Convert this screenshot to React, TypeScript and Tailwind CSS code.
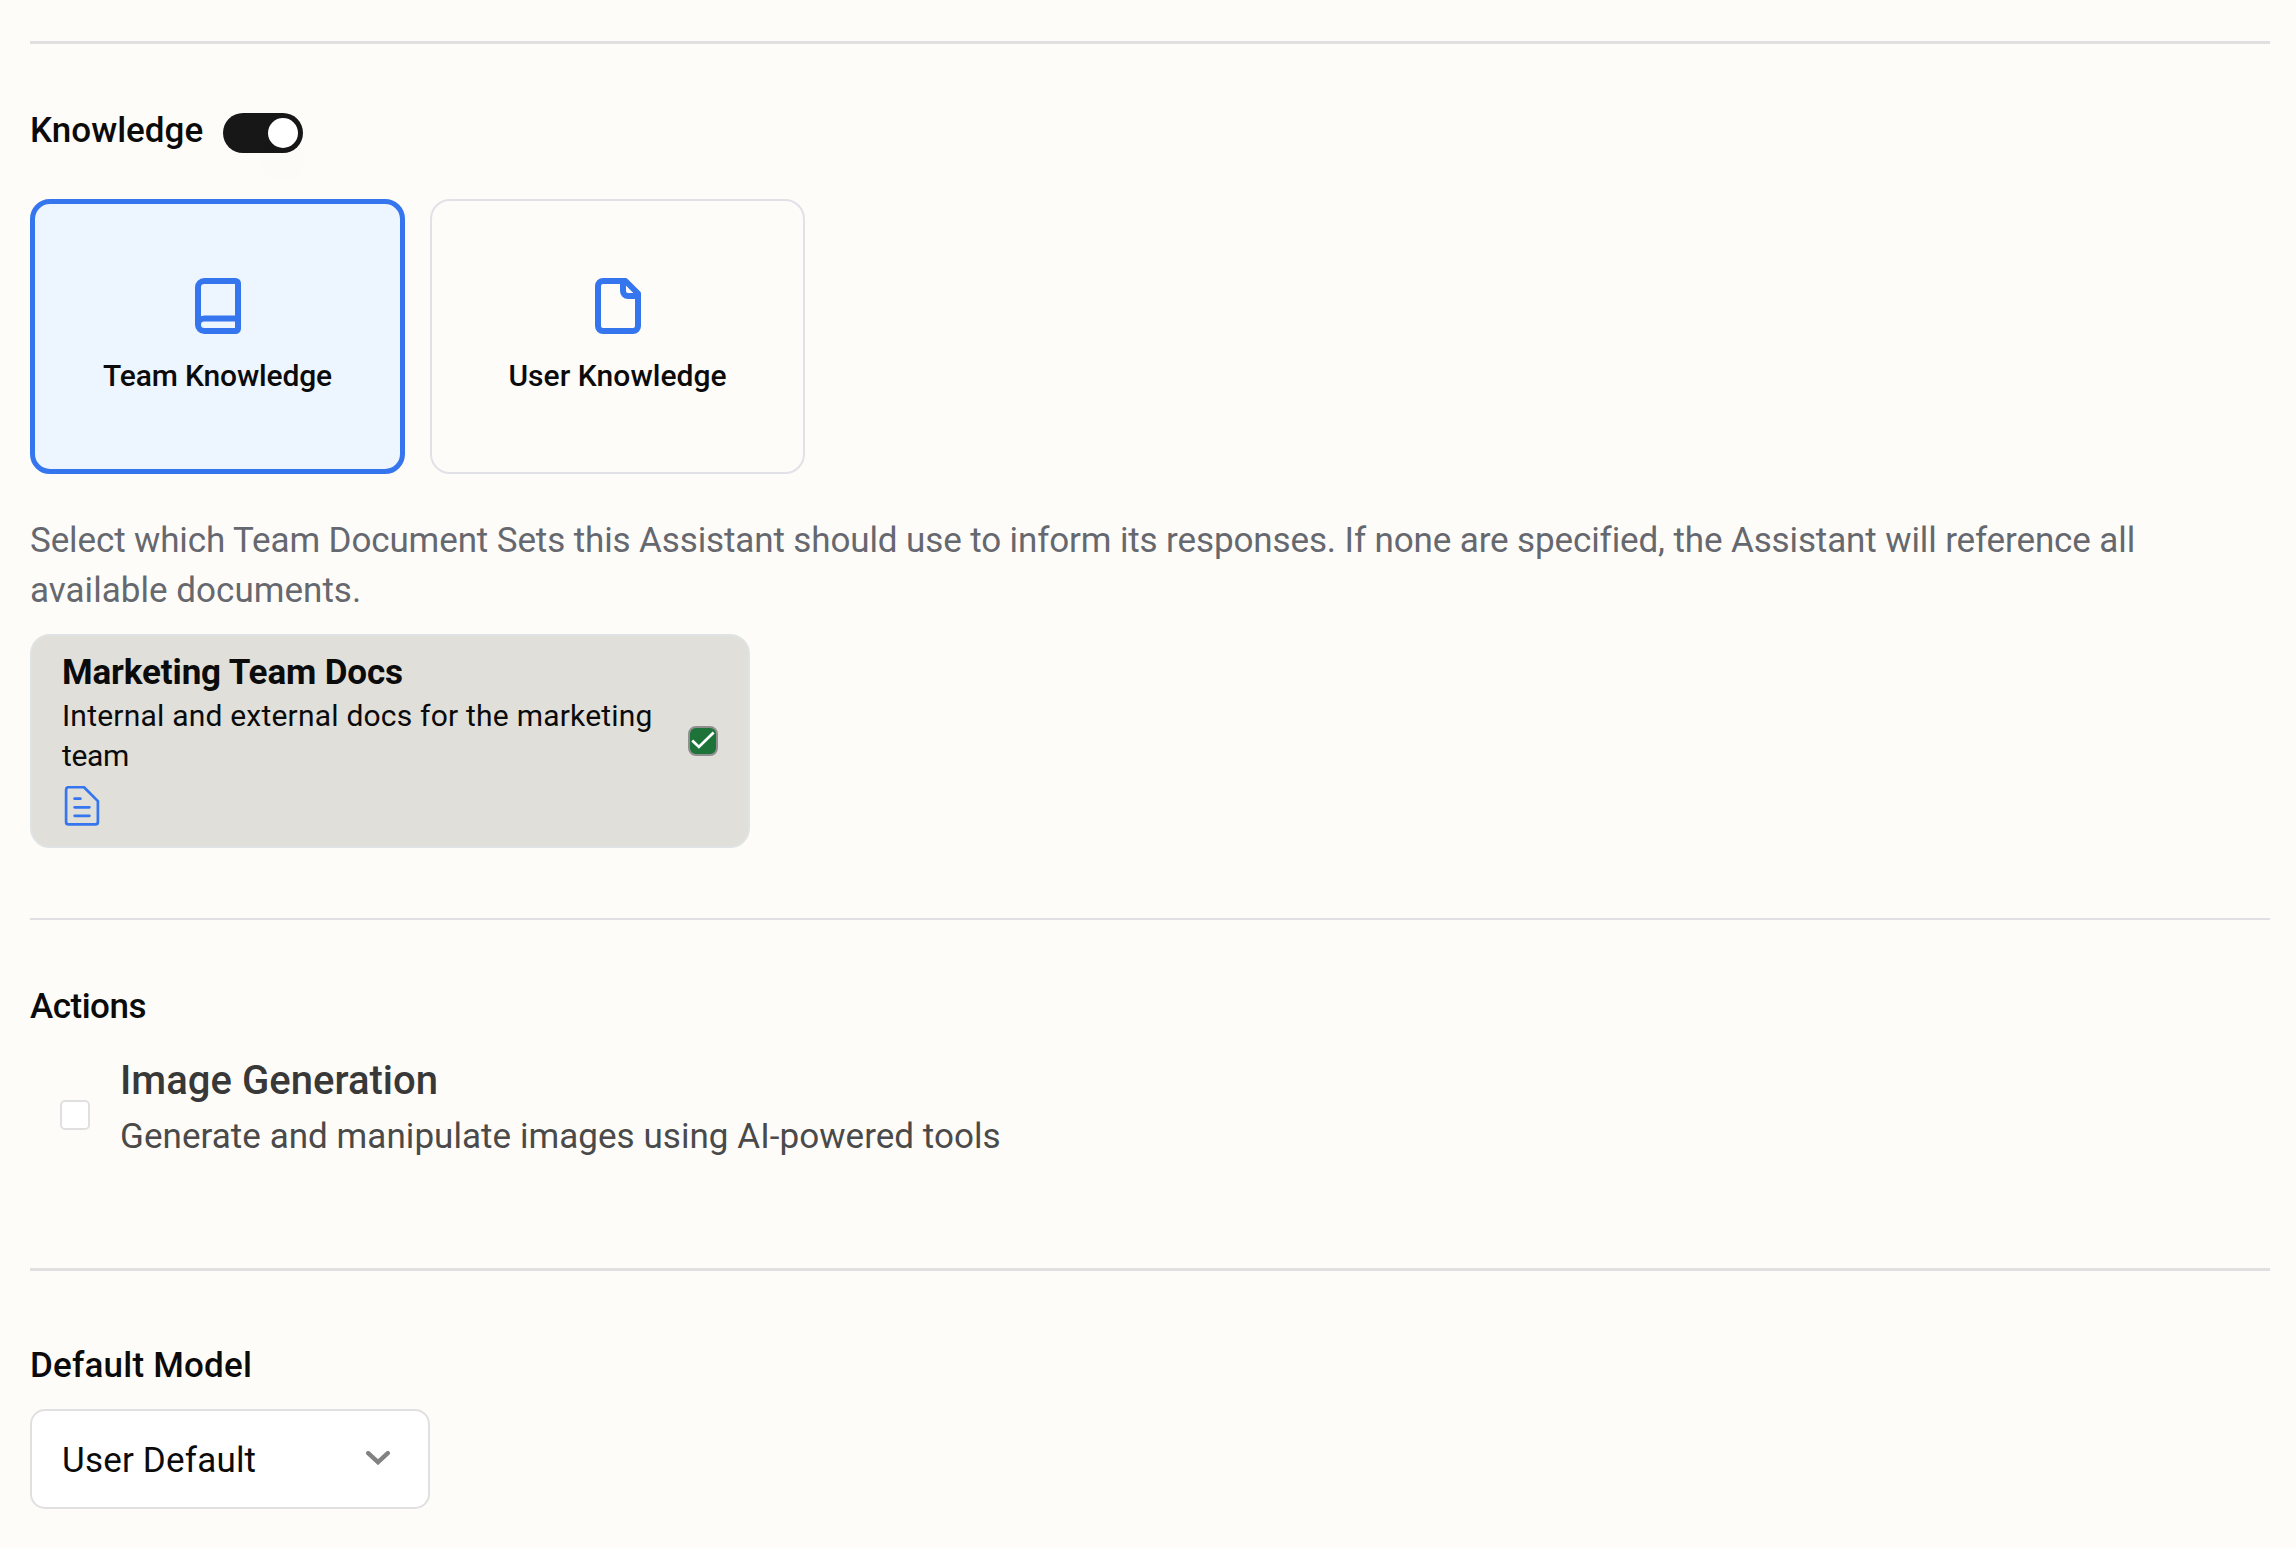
import { useState } from "react";
import type { ReactNode } from "react";

function BookIcon() {
  return (
    <svg className="size-[60px]" viewBox="0 0 24 24" fill="none" stroke="#3576ee" strokeWidth={2.4} strokeLinecap="round" strokeLinejoin="round">
      <path d="M4 19.5v-15A2.5 2.5 0 0 1 6.5 2H19a1 1 0 0 1 1 1v18a1 1 0 0 1-1 1H6.5a2.5 2.5 0 0 1 0-5H20" />
    </svg>
  );
}

function FileIcon() {
  return (
    <svg className="size-[60px]" viewBox="0 0 24 24" fill="none" stroke="#3576ee" strokeWidth={2.4} strokeLinecap="round" strokeLinejoin="round">
      <path d="M15 2H6a2 2 0 0 0-2 2v16a2 2 0 0 0 2 2h12a2 2 0 0 0 2-2V7Z" />
      <path d="M14 2v4a2 2 0 0 0 2 2h4" />
    </svg>
  );
}

function DocumentIcon() {
  return (
    <svg className="size-10" viewBox="0 0 40 40" fill="none" stroke="#3576ee" strokeWidth={2.7} strokeLinecap="round" strokeLinejoin="round">
      <path d="M22 1.2H6.6a2.5 2.5 0 0 0-2.5 2.5v32.2a2.5 2.5 0 0 0 2.5 2.5h26.8a2.5 2.5 0 0 0 2.5-2.5V15.1Z" />
      <path d="M12.6 12.7h5.8M12.6 21.3h14.8M12.6 29.8h14.8" />
    </svg>
  );
}

type KnowledgeCardProps = {
  icon: ReactNode;
  label: string;
  selected: boolean;
  tracking: string;
  onClick: () => void;
};

function KnowledgeCard({ icon, label, selected, tracking, onClick }: KnowledgeCardProps) {
  return (
    <button
      type="button"
      onClick={onClick}
      className={`flex h-[275px] w-[375px] flex-col items-center justify-center gap-5 rounded-[20px] pb-0.5 ${
        selected ? "border-[5px] border-[#3576ee] bg-[#edf5ff]" : "border-2 border-[#e0e2e8]"
      }`}
    >
      {icon}
      <span className={`text-[30px] leading-10 font-medium ${tracking}`}>{label}</span>
    </button>
  );
}

export default function App() {
  const [enabled, setEnabled] = useState(true);
  const [source, setSource] = useState<"team" | "user">("team");

  return (
    <main className="flex min-h-[1548px] flex-col bg-[#fefcf8] pt-[41px] pr-[26px] pl-[30px] font-[Roboto,sans-serif] text-[35px] leading-[50px] text-[#0b0b0b]">
      <hr className="border-t-[3px] border-[#e0e0e0]" />

      <section className="pt-[62px]">
        <div className="flex gap-5">
          <h2 className="w-[173px] font-medium whitespace-nowrap">Knowledge</h2>
          <button
            type="button"
            role="switch"
            aria-checked={enabled}
            aria-label="Knowledge"
            onClick={() => setEnabled(!enabled)}
            className={`mt-[7px] flex h-10 w-20 items-center rounded-full bg-[#171717] px-[5px] ${enabled ? "justify-end" : "justify-start"}`}
          >
            <span className="size-[30px] rounded-full bg-white shadow-[0_25px_37px_-7px_rgba(0,0,0,0.08)]" />
          </button>
        </div>

        <div className="mt-[43px] flex gap-[25px]">
          <KnowledgeCard icon={<BookIcon />} label="Team Knowledge" tracking="tracking-[-0.16px]" selected={source === "team"} onClick={() => setSource("team")} />
          <KnowledgeCard icon={<FileIcon />} label="User Knowledge" tracking="tracking-[0.04px]" selected={source === "user"} onClick={() => setSource("user")} />
        </div>

        <p className="mt-[42px] tracking-[-0.12px] text-[#66686f]">
          Select which Team Document Sets this Assistant should use to inform its responses. If none are specified, the Assistant will reference all
          <br />
          <span className="tracking-[0.03px]">available documents.</span>
        </p>

        <div className="mt-[18px] flex h-[214px] w-[720px] justify-between rounded-[20px] border-2 border-[#e0e3e3] bg-[#e0dfda] px-[30px] pt-[13px]">
          <div className="w-[600px]">
            <h3 className="text-[35px] leading-[48px] font-bold tracking-[-0.131px]">Marketing Team Docs</h3>
            <p className="-mt-px text-[30px] leading-10 tracking-[0.21px]">
              Internal and external docs for the marketing
              <br />
              <span className="tracking-[-0.347px]">team</span>
            </p>
            <div className="mt-2.5">
              <DocumentIcon />
            </div>
          </div>
          <span className="mt-[77px] flex size-[30px] items-center justify-center rounded-[8px] border-2 border-[#8f8f8f] bg-[#1e7339]">
            <svg className="size-[30px] shrink-0" viewBox="0 0 30 30" fill="none" stroke="#fff" strokeWidth={2.8}>
              <path d="M4.2 14.4 10.9 20.9 25.6 6.6" />
            </svg>
          </span>
        </div>
      </section>

      <hr className="mt-[70px] border-t-2 border-[#e0e0e4]" />

      <section className="pt-[62px]">
        <h2 className="font-medium tracking-[-0.5px]">Actions</h2>
        <div className="mt-6 flex items-start gap-[30px] pl-[30px]">
          <span className="mt-[44px] size-[30px] rounded-[5px] border-2 border-[#e0e0e0] bg-white" />
          <div>
            <h3 className="text-[40px] leading-[50px] font-medium tracking-[0.03px] text-[#383838]">Image Generation</h3>
            <p className="mt-1.5 tracking-[0.049px] text-[#4a4a4a]">Generate and manipulate images using AI-powered tools</p>
          </div>
        </div>
      </section>

      <hr className="mt-[106px] border-t-[3px] border-[#e0e0e0]" />

      <section className="pt-[70px]">
        <h2 className="font-medium tracking-[0.2px]">Default Model</h2>
        <button type="button" className="mt-[18px] flex h-[100px] w-[400px] items-center justify-between rounded-[15px] border-2 border-[#e0e0e0] bg-white pr-[38px] pl-[30px] text-left">
          <span className="pt-1 tracking-[0.2px]">User Default</span>
          <svg className="mb-0.5 h-3.5 w-6" viewBox="0 0 24 14" fill="none" stroke="#828282" strokeWidth={4.4} strokeLinecap="round">
            <path d="M2.2 2.2 12 11.2 21.8 2.2" />
          </svg>
        </button>
      </section>
    </main>
  );
}
